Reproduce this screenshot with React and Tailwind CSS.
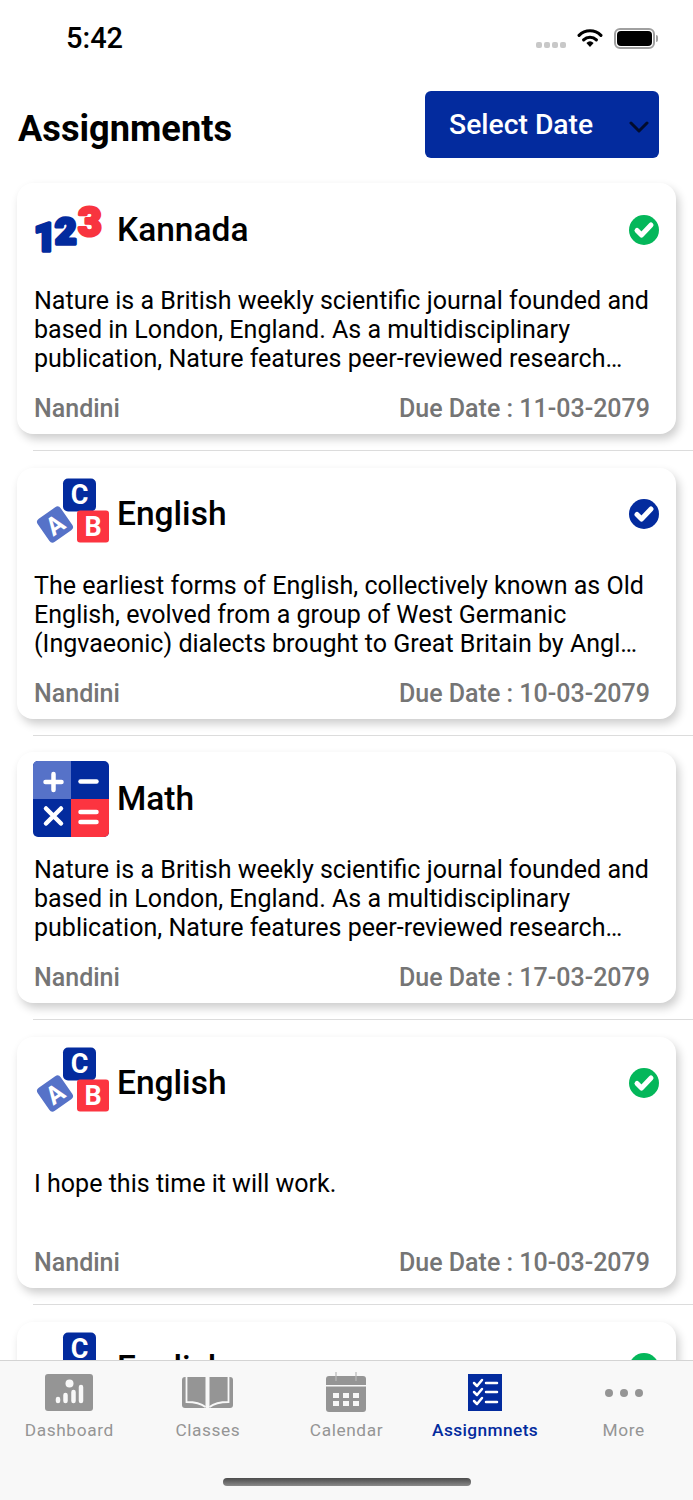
const natureText =
  "Nature is a British weekly scientific journal founded and based in London, England. As a multidisciplinary publication, Nature features peer-reviewed research…";
const englishText =
  "The earliest forms of English, collectively known as Old English, evolved from a group of West Germanic (Ingvaeonic) dialects brought to Great Britain by Angl…";

const assignments = [
  { id: 1, subject: "Kannada", icon: "numbers", status: "green", text: natureText, due: "11-03-2079" },
  { id: 2, subject: "English", icon: "blocks", status: "blue", text: englishText, due: "10-03-2079" },
  { id: 3, subject: "Math", icon: "math", status: null, text: natureText, due: "17-03-2079" },
  { id: 4, subject: "English", icon: "blocks", status: "green", text: "I hope this time it will work.", due: "10-03-2079", short: true },
  { id: 5, subject: "English", icon: "blocks", status: "green", text: "I hope this time it will work.", due: "10-03-2079", short: true },
];

function NumbersIcon() {
  return (
    <svg width="76" height="76" viewBox="0 0 76 76" className="shrink-0">
      <g fontFamily="Roboto, sans-serif" fontWeight="900" strokeLinejoin="round" strokeLinecap="round">
        <text x="1" y="59" fontSize="38" fill="#032b9e" stroke="#032b9e" strokeWidth="3.5">1</text>
        <text x="22" y="52" fontSize="37" fill="#032b9e" stroke="#032b9e" strokeWidth="3.5">2</text>
        <text x="45" y="44" fontSize="41" fill="#f8343f" stroke="#f8343f" strokeWidth="3">3</text>
      </g>
    </svg>
  );
}

function BlocksIcon() {
  return (
    <svg width="76" height="76" viewBox="0 0 76 76" className="shrink-0">
      <g fontFamily="Roboto, sans-serif" fontWeight="700" fill="#ffffff" textAnchor="middle">
        <g transform="rotate(-35 22 48.500)">
          <rect x="8" y="34.500" width="28" height="28" rx="4" fill="#5672c8" />
          <text x="22" y="57.500" fontSize="25" fill="#ffffff">A</text>
        </g>
        <rect x="30" y="2.500" width="33" height="33" rx="5" fill="#032b9e" />
        <text x="46.500" y="28" fontSize="27">C</text>
        <rect x="44" y="34.500" width="32" height="32" rx="3" fill="#fc3440" />
        <text x="60" y="60" fontSize="27">B</text>
      </g>
    </svg>
  );
}

function MathIcon() {
  return (
    <svg width="76" height="76" viewBox="0 0 76 76" className="shrink-0">
      <rect width="76" height="76" rx="5" fill="#032b9e" />
      <path d="M5 0h33v38H0V5a5 5 0 0 1 5-5z" fill="#5672c8" />
      <path d="M38 38h38v33a5 5 0 0 1-5 5H38z" fill="#fc3440" />
      <g stroke="#ffffff" strokeWidth="4.500" strokeLinecap="round" fill="none">
        <path d="M12.500 21h16M20.500 13v16" />
        <path d="M47.500 20.500h16" />
        <path d="M13 47.500l15 15M28 47.500l-15 15" />
        <path d="M47.500 51h16M47.500 61h16" />
      </g>
    </svg>
  );
}

function SubjectIcon({ type }) {
  if (type === "numbers") return <NumbersIcon />;
  if (type === "math") return <MathIcon />;
  return <BlocksIcon />;
}

function StatusCheck({ color }) {
  return (
    <svg width="30" height="30" viewBox="0 0 30 30">
      <circle cx="15" cy="15" r="15" fill={color === "blue" ? "#032b9e" : "#04b75a"} />
      <path d="M8 15.500l4.500 4.500 9.500-10" fill="none" stroke="#ffffff" strokeWidth="5" strokeLinecap="round" strokeLinejoin="round" />
    </svg>
  );
}

function AssignmentCard({ item }) {
  return (
    <div className="h-[251px] w-[659px] ml-[17px] bg-white rounded-[16px] shadow-[3px_5px_10px_rgba(0,0,0,0.2)] pl-[16px] pr-[17px] flex flex-col shrink-0">
      <div className="h-[93px] flex items-center">
        <SubjectIcon type={item.icon} />
        <span className="ml-[8px] text-[33.5px] leading-[40px] font-medium text-black flex-1">{item.subject}</span>
        {item.status && <StatusCheck color={item.status} />}
      </div>
      <div className={`mt-[10px] h-[88px] pl-[1px] pr-[8px] ${item.short ? "flex items-center" : ""}`}>
        <p className="text-[25.05px] leading-[29px] text-black">{item.text}</p>
      </div>
      <div className="mt-[20px] h-[30px] flex items-center justify-between pl-[1px] pr-[9px]">
        <span className="text-[25px] leading-[30px] font-medium text-[#757575]">Nandini</span>
        <span className="text-[25px] leading-[30px] font-medium text-[#757575]">Due Date : {item.due}</span>
      </div>
    </div>
  );
}

function StatusBar() {
  return (
    <div className="h-[76px] pl-[66px] pr-[35px] flex items-center justify-between shrink-0">
      <span className="text-[29px] leading-[34px] font-medium text-black">5:42</span>
      <div className="flex items-center">
        <div className="flex gap-[2px] mr-[11px] mt-[14px]">
          <span className="w-[6px] h-[6px] rounded-[2px] bg-[#c8c8c8]" />
          <span className="w-[6px] h-[6px] rounded-[2px] bg-[#c8c8c8]" />
          <span className="w-[6px] h-[6px] rounded-[2px] bg-[#c8c8c8]" />
          <span className="w-[6px] h-[6px] rounded-[2px] bg-[#c8c8c8]" />
        </div>
        <svg width="26" height="20" viewBox="0 0 28 22" className="mr-[11px]">
          <path d="M2 8a17 17 0 0 1 24 0" fill="none" stroke="#000" strokeWidth="3.500" strokeLinecap="round" />
          <path d="M7 13a10 10 0 0 1 14 0" fill="none" stroke="#000" strokeWidth="3.500" strokeLinecap="round" />
          <path d="M14 21l-4-4.500a6 6 0 0 1 8 0z" fill="#000" />
        </svg>
        <div className="w-[41px] h-[21px] rounded-[6px] border-2 border-[#a0a0a0] p-[1px]">
          <div className="w-full h-full bg-black rounded-[4px]" />
        </div>
        <span className="w-[2px] h-[7px] bg-[#a0a0a0] rounded-r-sm ml-[1px]" />
      </div>
    </div>
  );
}

function DashboardIcon() {
  return (
    <svg width="48" height="37" viewBox="0 0 48 37">
      <rect width="48" height="37" rx="3" fill="#959595" />
      <circle cx="24.500" cy="9.500" r="4" fill="#f8f8f8" />
      <g stroke="#f8f8f8" strokeLinecap="round" strokeWidth="4.500">
        <path d="M13 25v2M20.500 21v6M28.500 18v9M36 13v14" />
      </g>
    </svg>
  );
}

function BookIcon() {
  return (
    <svg width="51" height="33" viewBox="0 0 51 33">
      <path d="M3 1h20.500v31H3a3 3 0 0 1-3-3V4a3 3 0 0 1 3-3z" fill="#959595" />
      <path d="M48 1H27.500v31H48a3 3 0 0 0 3-3V4a3 3 0 0 0-3-3z" fill="#959595" />
      <g stroke="#f8f8f8" strokeWidth="1.800" fill="none">
        <path d="M4.500 0v26c7 0 14 1 19 5" />
        <path d="M46.500 0v26c-7 0-14 1-19 5" />
      </g>
    </svg>
  );
}

function CalendarIcon() {
  return (
    <svg width="40" height="41" viewBox="0 0 40 41">
      <path d="M3 4h34a3 3 0 0 1 3 3v6H0V7a3 3 0 0 1 3-3z" fill="#959595" />
      <path d="M0 14.500h40V37a3 3 0 0 1-3 3H3a3 3 0 0 1-3-3z" fill="#959595" />
      <path d="M10 0v9M30 0v9" stroke="#b8b8b8" strokeWidth="1.200" />
      <g fill="#f8f8f8">
        <rect x="7" y="21" width="6" height="5" />
        <rect x="17" y="21" width="6" height="5" />
        <rect x="27" y="21" width="6" height="5" />
        <rect x="7" y="29" width="6" height="5" />
        <rect x="17" y="29" width="6" height="5" />
        <rect x="27" y="29" width="6" height="5" />
      </g>
    </svg>
  );
}

function ChecklistIcon() {
  return (
    <svg width="34" height="37" viewBox="0 0 34 37">
      <rect width="34" height="37" fill="#032b9e" />
      <g stroke="#ffffff" strokeWidth="2.500" fill="none" strokeLinecap="round" strokeLinejoin="round">
        <path d="M6 9l3 3 5-6M6 18l3 3 5-6M6 27l3 3 5-6" />
        <path d="M18 9h11M18 18h11M18 28h11" />
      </g>
    </svg>
  );
}

function MoreIcon() {
  return (
    <div className="h-[37px] flex items-center gap-[7px]">
      <span className="w-[8px] h-[8px] rounded-full bg-[#959595]" />
      <span className="w-[8px] h-[8px] rounded-full bg-[#959595]" />
      <span className="w-[8px] h-[8px] rounded-full bg-[#959595]" />
    </div>
  );
}

const tabs = [
  { label: "Dashboard", icon: <DashboardIcon /> },
  { label: "Classes", icon: <BookIcon /> },
  { label: "Calendar", icon: <CalendarIcon /> },
  { label: "Assignmnets", icon: <ChecklistIcon />, active: true },
  { label: "More", icon: <MoreIcon /> },
];

function TabBar() {
  return (
    <div className="h-[140px] shrink-0 bg-[#f8f8f8] border-t border-[#d4d4d4] flex flex-col">
      <div className="flex pt-[11px]">
        {tabs.map((tab) => (
          <div key={tab.label} className="flex-1 flex flex-col items-center">
            <div className="h-[41px] flex items-center justify-center">{tab.icon}</div>
            <span
              className={`mt-[5px] text-[17.3px] leading-[24px] ${
                tab.active ? "tracking-[0.4px] text-[#032b9e] font-medium" : "tracking-[0.6px] text-[#959595]"
              }`}
            >
              {tab.label}
            </span>
          </div>
        ))}
      </div>
      <div className="mt-[36px] flex justify-center">
        <div className="w-[248px] h-[8px] rounded-full bg-gradient-to-b from-[#4c4c4c] to-[#8a8a8a]" />
      </div>
    </div>
  );
}

export default function App() {
  return (
    <div className="w-[693px] h-[1500px] bg-white flex flex-col overflow-hidden font-['Roboto',sans-serif]">
      <StatusBar />
      <div className="flex-1 overflow-hidden flex flex-col min-h-0">
        <div className="h-[107px] shrink-0 flex items-start justify-between pl-[18px] pr-[34px] pt-[15px]">
          <h1 className="mt-[17px] text-[36.2px] leading-[42px] font-bold text-black">Assignments</h1>
          <button className="w-[234px] h-[67px] bg-[#032b9e] rounded-[6px] flex items-center justify-between pl-[24px] pr-[10px]">
            <span className="text-[28.3px] leading-[34px] font-medium text-white">Select Date</span>
            <svg width="20" height="12" viewBox="0 0 20 12" className="mt-[4px]">
              <path d="M2 2l8 8 8-8" fill="none" stroke="#020c2c" strokeWidth="3" strokeLinecap="round" strokeLinejoin="round" />
            </svg>
          </button>
        </div>
        {assignments.map((item) => (
          <div key={item.id} className="shrink-0">
            <AssignmentCard item={item} />
            <div className="ml-[33px] mt-[16px] mb-[16.67px] h-px bg-[#dcdcdc]" />
          </div>
        ))}
      </div>
      <TabBar />
    </div>
  );
}
